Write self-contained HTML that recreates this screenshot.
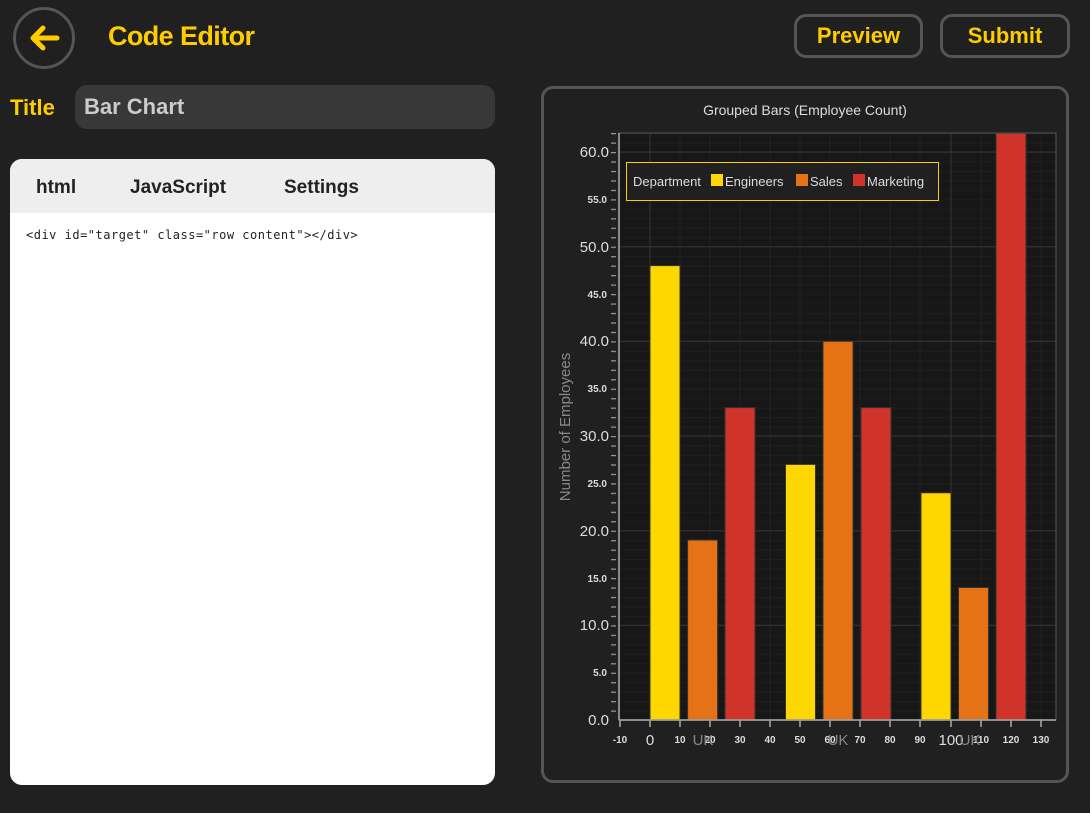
<!DOCTYPE html>
<html><head><meta charset="utf-8"><style>
body{margin:0;width:1090px;height:813px;background:#202020;font-family:"Liberation Sans",sans-serif;position:relative;overflow:hidden}
.abs{position:absolute}
.back{left:13px;top:7px;width:56px;height:56px;border:3px solid #555;border-radius:50%;box-sizing:content-box}
.h1{left:108px;top:21px;color:#ffcc00;font-size:27px;font-weight:bold;letter-spacing:-0.6px}
.btn{top:14px;height:40px;border:3px solid #555;border-radius:12px;color:#ffcc00;font-weight:bold;font-size:22px;text-align:center;line-height:40px}
.lbl{left:10px;top:95px;color:#ffcc00;font-size:22px;font-weight:bold}
.inp{left:75px;top:85px;width:420px;height:44px;background:#383838;border-radius:12px;color:#ccc;font-size:22px;font-weight:bold;line-height:44px;padding-left:9px;box-sizing:border-box}
.ed{left:10px;top:159px;width:485px;height:626px;background:#fff;border-radius:12px;overflow:hidden}
.tabs{height:54px;background:#eee;position:relative}
.tabs span{position:absolute;top:18px;font-size:19px;font-weight:bold;color:#222}
.code{position:absolute;left:16px;top:69px;font-family:"DejaVu Sans Mono","Liberation Mono",monospace;font-size:12px;letter-spacing:0.5px;color:#222}
.panel{left:541px;top:86px;width:528px;height:697px;border:3px solid #555;border-radius:12px;box-sizing:border-box}
</style></head><body>
<div class="abs back"><svg width="56" height="56" viewBox="0 0 56 56"><path d="M41 28H17M27 18L17 28L27 38" stroke="#ffcc00" stroke-width="5" fill="none" stroke-linecap="round" stroke-linejoin="round"/></svg></div>
<div class="abs h1">Code Editor</div>
<div class="abs btn" style="left:794px;width:129px;box-sizing:border-box;height:44px;line-height:38px">Preview</div>
<div class="abs btn" style="left:940px;width:130px;box-sizing:border-box;height:44px;line-height:38px">Submit</div>
<div class="abs lbl">Title</div>
<div class="abs inp">Bar Chart</div>
<div class="abs ed"><div class="tabs"><span style="left:26px">html</span><span style="left:120px">JavaScript</span><span style="left:274px">Settings</span></div>
<div class="code">&lt;div id="target" class="row content"&gt;&lt;/div&gt;</div></div>
<div class="abs panel"></div>
<svg class="abs" style="left:0;top:0" width="1090" height="813">
<defs>
<pattern id="mh" x="0" y="720" width="10" height="9.467" patternUnits="userSpaceOnUse"><rect x="0" y="0" width="10" height="1" fill="#1e1e1e"/></pattern>
<pattern id="tk" x="0" y="720" width="8" height="9.467" patternUnits="userSpaceOnUse"><rect x="3" y="0" width="5" height="1.2" fill="#999"/></pattern>
</defs>
<text x="805" y="115" fill="#ddd" font-size="14" text-anchor="middle">Grouped Bars (Employee Count)</text>
<rect x="619" y="133" width="437" height="587" fill="#171717"/>
<rect x="619" y="133" width="437" height="587" fill="url(#mh)"/>
<g stroke="#222">
<line x1="680" y1="133" x2="680" y2="720"/><line x1="710" y1="133" x2="710" y2="720"/><line x1="740" y1="133" x2="740" y2="720"/><line x1="770" y1="133" x2="770" y2="720"/><line x1="800" y1="133" x2="800" y2="720"/><line x1="830" y1="133" x2="830" y2="720"/><line x1="860" y1="133" x2="860" y2="720"/><line x1="890" y1="133" x2="890" y2="720"/><line x1="920" y1="133" x2="920" y2="720"/><line x1="981" y1="133" x2="981" y2="720"/><line x1="1011" y1="133" x2="1011" y2="720"/><line x1="1041" y1="133" x2="1041" y2="720"/>
</g>
<g stroke="#353535">
<line x1="650" y1="133" x2="650" y2="720"/><line x1="951" y1="133" x2="951" y2="720"/>
<line x1="619" y1="152" x2="1056" y2="152"/><line x1="619" y1="246.7" x2="1056" y2="246.7"/><line x1="619" y1="341.3" x2="1056" y2="341.3"/><line x1="619" y1="436" x2="1056" y2="436"/><line x1="619" y1="530.7" x2="1056" y2="530.7"/><line x1="619" y1="625.3" x2="1056" y2="625.3"/>
</g>
<rect x="611" y="133" width="8" height="587" fill="url(#tk)"/>
<g stroke="#333" stroke-width="1">
<rect x="650" y="265.6" width="30" height="454.4" fill="#ffd700"/>
<rect x="687.6" y="540" width="30" height="180" fill="#e57316"/>
<rect x="725" y="407.6" width="30" height="312.4" fill="#cf3329"/>
<rect x="785.5" y="464.4" width="30" height="255.6" fill="#ffd700"/>
<rect x="823" y="341.3" width="30" height="378.7" fill="#e57316"/>
<rect x="861" y="407.6" width="30" height="312.4" fill="#cf3329"/>
<rect x="921" y="492.8" width="30" height="227.2" fill="#ffd700"/>
<rect x="958.5" y="587.5" width="30" height="132.5" fill="#e57316"/>
<rect x="996" y="133" width="30" height="587" fill="#cf3329"/>
</g>
<rect x="619" y="133" width="437" height="587" fill="none" stroke="#444" stroke-width="1.5"/>
<line x1="619" y1="133" x2="619" y2="720" stroke="#aaa" stroke-width="1.5"/>
<line x1="619" y1="720" x2="1056" y2="720" stroke="#aaa" stroke-width="1.5"/>
<g stroke="#aaa" stroke-width="1.5">
<line x1="620" y1="720" x2="620" y2="727"/><line x1="650" y1="720" x2="650" y2="727"/><line x1="680" y1="720" x2="680" y2="727"/><line x1="710" y1="720" x2="710" y2="727"/><line x1="740" y1="720" x2="740" y2="727"/><line x1="770" y1="720" x2="770" y2="727"/><line x1="800" y1="720" x2="800" y2="727"/><line x1="830" y1="720" x2="830" y2="727"/><line x1="860" y1="720" x2="860" y2="727"/><line x1="890" y1="720" x2="890" y2="727"/><line x1="920" y1="720" x2="920" y2="727"/><line x1="951" y1="720" x2="951" y2="727"/><line x1="981" y1="720" x2="981" y2="727"/><line x1="1011" y1="720" x2="1011" y2="727"/><line x1="1041" y1="720" x2="1041" y2="727"/>
</g>
<g fill="#ddd" text-anchor="end">
<g font-size="15"><text x="609" y="157">60.0</text><text x="609" y="252">50.0</text><text x="609" y="346">40.0</text><text x="609" y="441">30.0</text><text x="609" y="536">20.0</text><text x="609" y="630">10.0</text><text x="609" y="725">0.0</text></g>
<g font-size="10" font-weight="bold"><text x="607" y="203">55.0</text><text x="607" y="298">45.0</text><text x="607" y="392">35.0</text><text x="607" y="487">25.0</text><text x="607" y="582">15.0</text><text x="607" y="676">5.0</text></g>
</g>
<g fill="#ddd" text-anchor="middle" font-size="10" font-weight="bold">
<text x="620" y="743">-10</text><text x="680" y="743">10</text><text x="710" y="743">20</text><text x="740" y="743">30</text><text x="770" y="743">40</text><text x="800" y="743">50</text><text x="830" y="743">60</text><text x="860" y="743">70</text><text x="890" y="743">80</text><text x="920" y="743">90</text><text x="981" y="743">110</text><text x="1011" y="743">120</text><text x="1041" y="743">130</text>
</g>
<g fill="#ddd" text-anchor="middle" font-size="15"><text x="650" y="745">0</text><text x="951" y="745">100</text></g>
<g fill="#888" text-anchor="middle" font-size="15"><text x="703" y="745">UK</text><text x="838" y="745">UK</text><text x="970" y="745">UK</text></g>
<text transform="translate(570,427) rotate(-90)" fill="#888" font-size="15" text-anchor="middle">Number of Employees</text>
<rect x="626.5" y="162.5" width="312" height="38" fill="#202020" stroke="#ffcc00" stroke-width="1"/>
<g font-size="13" fill="#ddd"><text x="633" y="186">Department</text>
<rect x="711" y="174" width="12" height="12" fill="#ffd700"/><text x="725" y="186">Engineers</text>
<rect x="796" y="174" width="12" height="12" fill="#e57316"/><text x="810" y="186">Sales</text>
<rect x="853" y="174" width="12" height="12" fill="#cf3329"/><text x="867" y="186">Marketing</text></g>
</svg>
</body></html>
